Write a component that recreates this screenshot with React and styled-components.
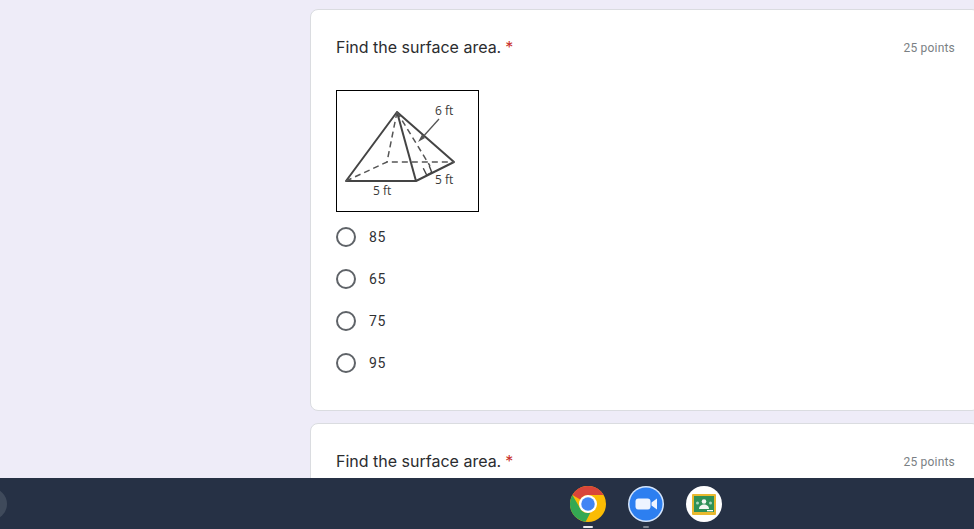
import React from "react";
import styled, { createGlobalStyle } from "styled-components";

const Global = createGlobalStyle`
  html, body { margin: 0; padding: 0; height: 100%; overflow: hidden; background: #eeecf8; }
  #root { height: 100%; }
`;
const Screen = styled.div`
  width: 974px; height: 529px; display: flex; flex-direction: column; overflow: hidden;
`;
const Content = styled.main`
  flex: 1; min-height: 0; overflow: hidden; display: flex; flex-direction: column;
  gap: 12px; padding: 9px 0 0 310px; background: #eeecf8;
`;
const Card = styled.section`
  flex: none; width: 670px; box-sizing: border-box; background: #fff;
  border: 1px solid #dadce0; border-radius: 8px; padding: 25px 24px 26px 25px;
`;
const Header = styled.div`
  display: flex; justify-content: space-between; align-items: center; height: 24px;
`;
const Title = styled.h2`
  margin: 0; font: 400 16px/24px Inter, "Noto Sans", sans-serif; color: #2b2c2f; letter-spacing: 0;
`;
const Star = styled.span`
  color: #c9302c; margin-left: 4px;
`;
const Points = styled.span`
  font: 400 12px/16px Roboto, sans-serif; color: #7a7f84; letter-spacing: .2px; margin-top: 2px;
`;
const Figure = styled.div`
  width: 143px; height: 122px; box-sizing: border-box; margin-top: 31px;
  border: 1px solid #000; background: #fff;
  svg { display: block; }
  text { font: 400 12px "Open Sans", sans-serif; fill: #3a3a3a; }
`;
const Options = styled.div`
  margin-top: 4px; display: flex; flex-direction: column;
`;
const Option = styled.label`
  height: 42px; display: flex; align-items: center; gap: 13px;
`;
const Radio = styled.span`
  width: 20px; height: 20px; box-sizing: border-box; border: 2px solid #5f6368; border-radius: 50%;
`;
const OptionText = styled.span`
  font: 400 14px/20px Roboto, sans-serif; color: #303134; letter-spacing: .7px;
`;
const Shelf = styled.footer`
  flex: none; height: 51px; background: #263145; display: flex; align-items: center;
`;
const Launcher = styled.span`
  flex: none; width: 32px; height: 32px; border-radius: 50%; margin-left: -25px;
  background: #3f4a5b;
`;
const Apps = styled.div`
  display: flex; gap: 22px; margin-left: 563px;
`;
const App_ = styled.div`
  position: relative; width: 36px; height: 36px;
  svg { display: block; }
`;
const Dot = styled.span`
  position: absolute; left: 50%; bottom: -6px; transform: translateX(-50%);
  height: 2px; border-radius: 1px; width: ${p => p.$active ? "10px" : "6px"};
  background: ${p => p.$active ? "#e8eaed" : "#7d8591"};
`;

const Pyramid = () => (
  <svg width="141" height="120" viewBox="0 0 141 120">
    <g fill="none" stroke="#444" strokeWidth="2" strokeLinejoin="round">
      <path d="M60 21 L9 90 H79 L117 71 L60 21 Z" />
      <path d="M60 21 L79 90" />
    </g>
    <g fill="none" stroke="#555" strokeWidth="1.5" strokeDasharray="6 4">
      <path d="M60 21 L50 71" />
      <path d="M9 90 L50 71 H117" />
      <path d="M60 21 L93 75" />
    </g>
    <path d="M86.3 77.3 L89.7 84 L94.7 81.3 L92.3 75" fill="none" stroke="#444" strokeWidth="1.4" />
    <path d="M102 28 L84 48" fill="none" stroke="#555" strokeWidth="1.3" />
    <path d="M81 51 L88 47 L85 43.5 Z" fill="#555" />
    <text x="98" y="24">6 ft</text>
    <text x="98" y="93">5 ft</text>
    <text x="36" y="104">5 ft</text>
  </svg>
);

const Chrome = () => (
  <svg width="36" height="36" viewBox="0 0 48 48">
    <circle cx="24" cy="24" r="24" fill="#fbbc04" />
    <path d="M24 0a24 24 0 0 1 20.8 12H24a12 12 0 0 0-10.4 6L3.2 12A24 24 0 0 1 24 0Z" fill="#d9453a" />
    <path d="M3.2 12 13.6 30a12 12 0 0 0 13.5 5.6L20.8 47.8A24 24 0 0 1 3.2 12Z" fill="#34a853" />
    <circle cx="24" cy="24" r="12" fill="#fff" />
    <circle cx="24" cy="24" r="9" fill="#4285f4" />
  </svg>
);
const Zoom = () => (
  <svg width="36" height="36" viewBox="0 0 36 36">
    <circle cx="18" cy="18" r="18" fill="#d5e6fd" />
    <circle cx="18" cy="18" r="16.5" fill="#2d7ff0" />
    <rect x="7.5" y="12.5" width="15" height="11" rx="3" fill="#eef4ff" />
    <path d="M23.5 16.5 29 12.5v11l-5.5-4Z" fill="#eef4ff" />
  </svg>
);
const Classroom = () => (
  <svg width="36" height="36" viewBox="0 0 36 36">
    <circle cx="18" cy="18" r="18" fill="#fff" />
    <rect x="6" y="8" width="24" height="21" rx="1" fill="#e9b92f" />
    <rect x="8" y="10" width="20" height="16" fill="#2f9157" />
    <circle cx="18" cy="15.5" r="2.3" fill="#f4f7f2" />
    <path d="M13 23c0-3 2.4-4.5 5-4.5s5 1.500 5 4.500Z" fill="#f4f7f2" />
    <circle cx="11.5" cy="17" r="1.500" fill="#a9d6b8" />
    <circle cx="24.5" cy="17" r="1.500" fill="#a9d6b8" />
    <rect x="21" y="24" width="6" height="1.300" fill="#fff" />
  </svg>
);

const choices = ["85", "65", "75", "95"];

const QuestionHeader = () => (
  <Header>
    <Title>Find the surface area.<Star>*</Star></Title>
    <Points>25 points</Points>
  </Header>
);

export default function App() {
  return (
    <Screen>
      <Global />
      <Content>
        <Card>
          <QuestionHeader />
          <Figure><Pyramid /></Figure>
          <Options>
            {choices.map(c => (
              <Option key={c}><Radio /><OptionText>{c}</OptionText></Option>
            ))}
          </Options>
        </Card>
        <Card>
          <QuestionHeader />
        </Card>
      </Content>
      <Shelf>
        <Launcher />
        <Apps>
          <App_><Chrome /><Dot $active /></App_>
          <App_><Zoom /><Dot /></App_>
          <App_><Classroom /></App_>
        </Apps>
      </Shelf>
    </Screen>
  );
}
